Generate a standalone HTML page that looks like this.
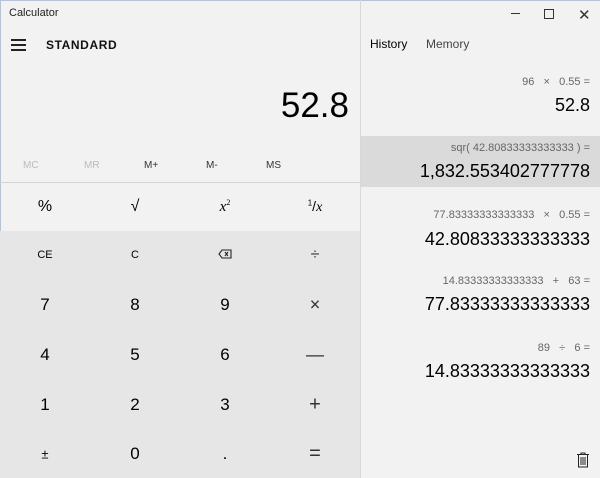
<!DOCTYPE html><html><head><style>
body{margin:0;width:600px;height:478px;overflow:hidden;background:#f2f2f2;font-family:"Liberation Sans",sans-serif;position:relative}
div,span{position:absolute}
.c{text-align:center;width:90px;transform:translateY(-50%)}
.r{right:10px;text-align:right;white-space:nowrap}
.s{font-size:11px;color:#666}
.b{font-size:18px;color:#000}
</style></head><body>
<div style="left:0;top:0;width:600px;height:1px;background:#a9c6e6"></div>
<div style="left:0;top:0;width:1px;height:478px;background:#a9c6e6"></div>
<div style="left:9px;top:7px;font-size:11px;color:#222">Calculator</div>
<div style="left:11px;top:39px;width:15px;height:2px;background:#222;box-shadow:0 5px 0 #222,0 10px 0 #222"></div>
<div style="left:46px;top:38px;font-size:12px;font-weight:bold;letter-spacing:0.6px;color:#111">STANDARD</div>
<div style="left:200px;width:149px;text-align:right;top:86px;font-size:35px;color:#000">52.8</div>
<div style="top:160px;left:0;font-size:10px;width:360px">
<span style="left:23px;color:#bbb">MC</span><span style="left:84px;color:#bbb">MR</span><span style="left:144px;color:#333">M+</span><span style="left:206px;color:#333">M-</span><span style="left:266px;color:#333">MS</span></div>
<div style="left:0;top:182px;width:360px;height:1px;background:#d4d4d4"></div>
<div style="left:0;top:231px;width:360px;height:247px;background:#e6e6e6"></div>
<div style="left:360px;top:0;width:1px;height:478px;background:#d8d8d8"></div>
<div class="c" style="left:0;top:207px;font-size:16px">%</div>
<div class="c" style="left:90px;top:207px;font-size:16px">√</div>
<div class="c" style="left:180px;top:207px;font-size:15px;font-family:'Liberation Serif',serif;font-style:italic">x<sup style="font-size:8px;font-style:normal">2</sup></div>
<div class="c" style="left:270px;top:207px;font-size:14px"><sup style="font-size:8px">1</sup>/<i style="font-family:'Liberation Serif',serif">x</i></div>
<div class="c" style="left:0;top:255px;font-size:11px">CE</div>
<div class="c" style="left:90px;top:255px;font-size:11px">C</div>
<div class="c" style="left:180px;top:255px"><svg width="14" height="10" viewBox="0 0 14 10"><path d="M4 1H13V9H4L1 5Z M7 3L10 7M10 3L7 7" fill="none" stroke="#222" stroke-width="1.1"/></svg></div>
<div class="c" style="left:270px;top:255px;font-size:16px;color:#333">÷</div>
<div class="c" style="left:0;top:305px;font-size:17px">7</div><div class="c" style="left:90px;top:305px;font-size:17px">8</div><div class="c" style="left:180px;top:305px;font-size:17px">9</div><div class="c" style="left:270px;top:305px;font-size:18px;color:#333">×</div>
<div class="c" style="left:0;top:355px;font-size:17px">4</div><div class="c" style="left:90px;top:355px;font-size:17px">5</div><div class="c" style="left:180px;top:355px;font-size:17px">6</div><div class="c" style="left:270px;top:355px;font-size:18px;color:#333">—</div>
<div class="c" style="left:0;top:405px;font-size:17px">1</div><div class="c" style="left:90px;top:405px;font-size:17px">2</div><div class="c" style="left:180px;top:405px;font-size:17px">3</div><div class="c" style="left:270px;top:405px;font-size:20px;color:#333">+</div>
<div class="c" style="left:0;top:454px;font-size:13px">±</div><div class="c" style="left:90px;top:454px;font-size:17px">0</div><div class="c" style="left:180px;top:454px;font-size:17px">.</div><div class="c" style="left:270px;top:454px;font-size:20px;color:#333">=</div>
<div style="left:511px;top:13px;width:9px;height:1px;background:#333"></div>
<div style="left:544px;top:9px;width:8px;height:8px;border:1px solid #333"></div>
<div style="left:578px;top:6px;font-size:15px;color:#333">✕</div>
<div style="left:370px;top:37px;font-size:12px;color:#000">History</div>
<div style="left:426px;top:37px;font-size:12px;color:#444">Memory</div>
<div class="r s" style="top:76px">96 &nbsp; × &nbsp; 0.55 =</div>
<div class="r b" style="top:95px">52.8</div>
<div style="left:361px;top:136px;width:239px;height:51px;background:#dadada"></div>
<div class="r s" style="top:142px">sqr( 42.80833333333333 ) =</div>
<div class="r b" style="top:161px">1,832.553402777778</div>
<div class="r s" style="top:209px">77.83333333333333 &nbsp; × &nbsp; 0.55 =</div>
<div class="r b" style="top:229px">42.80833333333333</div>
<div class="r s" style="top:275px">14.83333333333333 &nbsp; + &nbsp; 63 =</div>
<div class="r b" style="top:294px">77.83333333333333</div>
<div class="r s" style="top:342px">89 &nbsp; ÷ &nbsp; 6 =</div>
<div class="r b" style="top:361px">14.83333333333333</div>
<svg style="position:absolute;left:576px;top:452px" width="14" height="16" viewBox="0 0 14 16"><path d="M1 2.5H13M5 2.5V1H9V2.5M2.5 2.5V15H11.5V2.5M5 5V13M7 5V13M9 5V13" fill="none" stroke="#222" stroke-width="1"/></svg>
</body></html>
